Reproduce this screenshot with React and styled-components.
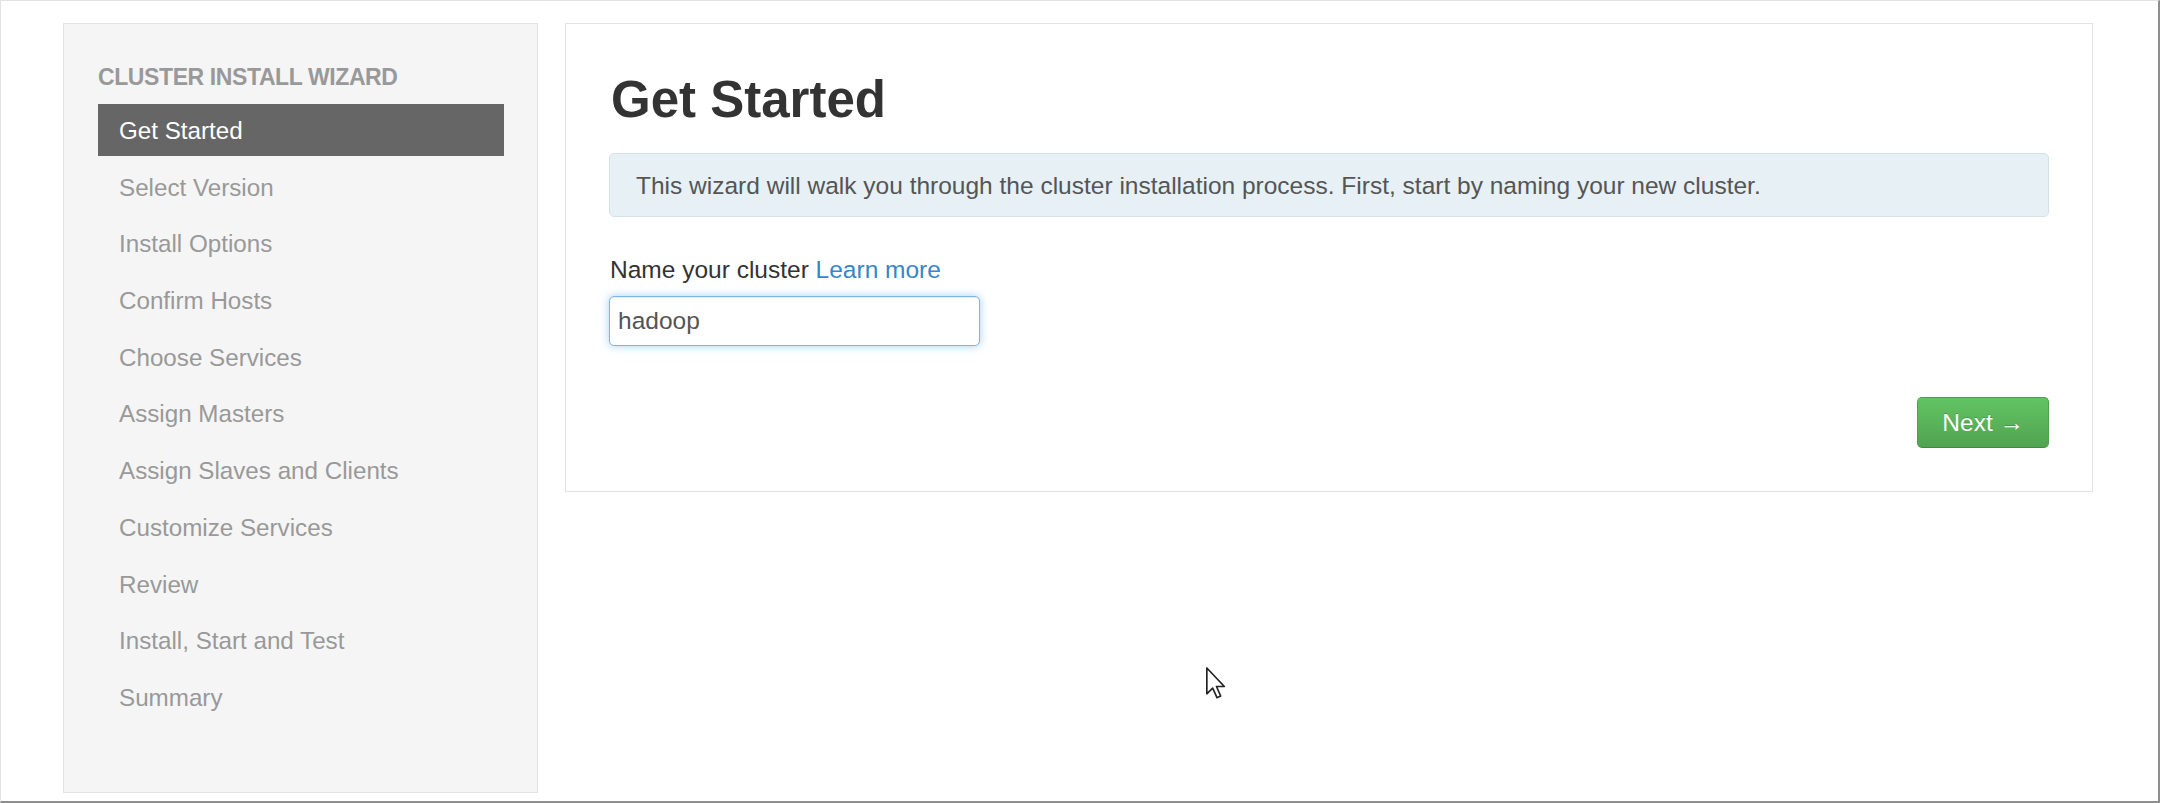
import React from 'react';
import styled, { createGlobalStyle } from 'styled-components';

const steps = [
  'Get Started',
  'Select Version',
  'Install Options',
  'Confirm Hosts',
  'Choose Services',
  'Assign Masters',
  'Assign Slaves and Clients',
  'Customize Services',
  'Review',
  'Install, Start and Test',
  'Summary',
];

const GlobalStyle = createGlobalStyle`
  html, body {
    margin: 0;
    padding: 0;
    background: #fff;
  }
  body {
    font-family: "Liberation Sans", Arial, sans-serif;
  }
`;

class App extends React.Component {
  render() {
    return (
      <>
        <GlobalStyle />
        <Frame>
          <Sidebar>
            <NavHeader>CLUSTER INSTALL WIZARD</NavHeader>
            <NavList>
              {steps.map((step, i) => (
                <NavItem key={step} active={i === 0}>{step}</NavItem>
              ))}
            </NavList>
          </Sidebar>
          <Panel>
            <Heading>Get Started</Heading>
            <Alert>
              This wizard will walk you through the cluster installation process. First, start by naming your new cluster.
            </Alert>
            <Label>
              Name your cluster <Link href="#">Learn more</Link>
            </Label>
            <Input defaultValue="hadoop" />
            <Footer>
              <NextButton>Next &rarr;</NextButton>
            </Footer>
          </Panel>
          <Cursor width="20" height="32" viewBox="0 0 12 19">
            <path
              d="M0.5 0.5 L0.5 16 L4 12.6 L6.6 18.3 L8.8 17.3 L6.3 11.6 L11 11.6 Z"
              fill="#fff"
              stroke="#222"
              strokeWidth="1"
              strokeLinejoin="round"
            />
          </Cursor>
        </Frame>
      </>
    );
  }
}

export default App;

const Frame = styled.div`
  position: relative;
  box-sizing: border-box;
  width: 2160px;
  height: 803px;
  border-top: 1px solid #e2e2e2;
  border-left: 1px solid #e2e2e2;
  border-right: 2px solid #8e8e8e;
  border-bottom: 2px solid #8e8e8e;
  padding: 22px 0 0 62px;
  display: flex;
  align-items: flex-start;
  gap: 27px;
  overflow: hidden;
`;

const Sidebar = styled.div`
  box-sizing: border-box;
  width: 475px;
  height: 770px;
  background: #f5f5f5;
  border: 1px solid #e3e3e3;
  padding: 40px 33px 0 34px;
`;

const NavHeader = styled.div`
  font-size: 23px;
  line-height: 26px;
  font-weight: 700;
  letter-spacing: -0.4px;
  color: #999;
  margin-bottom: 14px;
`;

const NavList = styled.div`
  display: flex;
  flex-direction: column;
  gap: 4.7px;
`;

const NavItem = styled.div`
  height: 52px;
  line-height: 53px;
  padding-left: 21px;
  font-size: 24.2px;
  color: ${p => (p.active ? '#fff' : '#999')};
  background: ${p => (p.active ? '#666' : 'transparent')};
  white-space: nowrap;
`;

const Panel = styled.div`
  box-sizing: border-box;
  width: 1528px;
  background: #fff;
  border: 1px solid #e3e3e3;
  padding: 46px 43px 43px 43px;
  display: flex;
  flex-direction: column;
`;

const Heading = styled.h2`
  margin: 0 0 23px 2px;
  font-size: 51px;
  line-height: 60px;
  font-weight: 700;
  color: #333;
`;

const Alert = styled.div`
  box-sizing: border-box;
  height: 64px;
  padding: 15px 26px 13px;
  border: 1px solid #d3e2ea;
  border-radius: 5px;
  background: #e6f0f5;
  color: #555;
  font-size: 24.5px;
  line-height: 34px;
  white-space: nowrap;
`;

const Label = styled.div`
  margin-top: 36px;
  margin-left: 1px;
  font-size: 24.5px;
  line-height: 34px;
  color: #333;
`;

const Link = styled.a`
  color: #3786c8;
  text-decoration: none;
`;

const Input = styled.input`
  box-sizing: border-box;
  margin-top: 9px;
  width: 371px;
  height: 50px;
  padding: 0 8px;
  border: 1px solid #7fb5e4;
  border-radius: 5px;
  box-shadow: inset 0 1px 1px rgba(0, 0, 0, 0.075), 0 0 8px rgba(82, 168, 236, 0.55);
  font-family: "Liberation Sans", Arial, sans-serif;
  font-size: 24.5px;
  color: #555;
  outline: none;
`;

const Footer = styled.div`
  margin-top: 51px;
  display: flex;
  justify-content: flex-end;
`;

const NextButton = styled.button`
  box-sizing: border-box;
  height: 51px;
  padding: 0 24px;
  border: 1px solid #4f9d4f;
  border-bottom-color: #3f8a3f;
  border-radius: 5px;
  background: linear-gradient(to bottom, #62c462, #51a351);
  color: #fff;
  font-family: "Liberation Sans", Arial, sans-serif;
  font-size: 24.5px;
  line-height: 49px;
  text-shadow: 0 -1px 0 rgba(0, 0, 0, 0.2);
  cursor: pointer;
`;

const Cursor = styled.svg`
  position: absolute;
  left: 1205px;
  top: 666px;
  pointer-events: none;
`;
